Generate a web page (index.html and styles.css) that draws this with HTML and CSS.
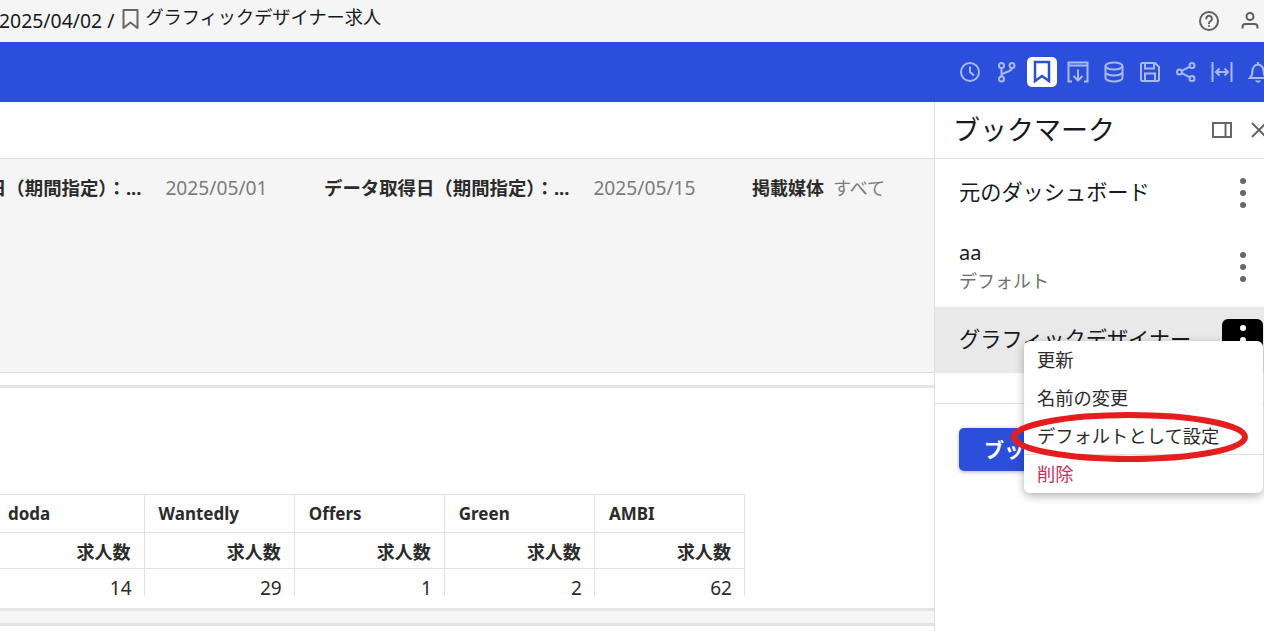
FILE: index.html
```html
<!DOCTYPE html>
<html lang="ja">
<head>
    <meta charset="UTF-8">
    <title>グラフィックデザイナー求人</title>
    <link rel="stylesheet" href="styles.css">
</head>
<body>

    <!-- パンくず -->
    <div class="topbar">
        <div class="crumb">
            <span class="crumb-date">2025/04/02 /</span>
            <svg class="crumb-icon" width="17" height="22" viewBox="0 0 17 22"><path d="M1.500 2h14v18l-7-5.500L1.500 20z" fill="none" stroke="#666" stroke-width="2" stroke-linejoin="round"/></svg>
            <span class="crumb-name">グラフィックデザイナー求人</span>
        </div>
        <div class="top-icons">
            <svg width="22" height="22" viewBox="0 0 22 22" fill="none" stroke="#5f5f5f" stroke-width="2"><circle cx="11" cy="11" r="9"/><path d="M8.300 8.600a2.800 2.800 0 1 1 4.300 2.400c-1 .6-1.600 1-1.600 2.200" stroke-linecap="round"/><path d="M11 15.300v1.500"/></svg>
            <svg width="20" height="22" viewBox="0 0 20 22" fill="none" stroke="#5f5f5f" stroke-width="2"><circle cx="10" cy="6.500" r="3.500"/><path d="M2.500 18.500v-1.500c0-2 1.500-3 3-3h9c1.500 0 3 1 3 3v1.500"/></svg>
        </div>
    </div>

    <div class="toolbar">
        <div class="tool"><svg width="22" height="22" viewBox="0 0 22 22"><circle cx="11" cy="11" r="9"/><path d="M11 5.500V11l4 3.500"/></svg></div>
        <div class="tool"><svg width="22" height="22" viewBox="0 0 22 22"><circle cx="6.500" cy="4.500" r="2.500"/><circle cx="6.500" cy="18" r="2.500"/><circle cx="17" cy="4.500" r="2.500"/><path d="M6.500 7v8.500M17 7c0 5-10.500 3-10.500 8.500"/></svg></div>
        <div class="tool tool-active"><svg width="22" height="24" viewBox="0 0 22 24"><path d="M4 2h14v19l-7-5-7 5z"/></svg></div>
        <div class="tool"><svg width="22" height="22" viewBox="0 0 22 22"><path d="M5 20.500H1.500v-19h19v19H17M1.500 4.500h19M11 8.500v11M6.500 15l4.500 4.500 4.500-4.500"/></svg></div>
        <div class="tool"><svg width="22" height="22" viewBox="0 0 22 22"><ellipse cx="11" cy="5" rx="8.500" ry="3.500"/><path d="M2.500 5v12c0 2 4 3.500 8.500 3.500s8.500-1.500 8.500-3.500V5M2.500 11c0 2 4 3.500 8.500 3.500s8.500-1.500 8.500-3.500"/></svg></div>
        <div class="tool"><svg width="22" height="22" viewBox="0 0 22 22"><path d="M2 3.500A1.500 1.500 0 0 1 3.500 2H16l4 4v12.500a1.500 1.500 0 0 1-1.500 1.500h-15A1.500 1.500 0 0 1 2 18.500zM6 2v5.500h9V2M6 20v-7.500h10V20"/></svg></div>
        <div class="tool"><svg width="22" height="22" viewBox="0 0 22 22"><circle cx="4.500" cy="11" r="2.500"/><circle cx="17" cy="4.500" r="2.500"/><circle cx="17" cy="17.500" r="2.500"/><path d="M6.800 9.800l8-4.200M6.800 12.200l8 4.200"/></svg></div>
        <div class="tool"><svg width="22" height="22" viewBox="0 0 22 22"><path d="M1.500 1v20M20.500 1v20M5 11h12M8.500 7.500L5 11l3.500 3.500M13.500 7.500L17 11l-3.500 3.500"/></svg></div>
        <div class="tool"><svg width="22" height="22" viewBox="0 0 22 22"><path d="M3 17h16c-2-2-2.500-4-2.500-7.500 0-3-2.500-6-5.500-6s-5.500 3-5.500 6C5.500 13 5 15 3 17zM11 1v2.500M9 19.500c.5 1.500 3.500 1.500 4 0"/></svg></div>
    </div>

    <div class="content">
        <div class="main">
            <div class="sheet-title"></div>

            <div class="filters">
                <div class="filter filter-first">
                    <span class="filter-label">データ取得日（期間指定）：...</span>
                    <span class="filter-value">2025/05/01</span>
                </div>
                <div class="filter">
                    <span class="filter-label">データ取得日（期間指定）：...</span>
                    <span class="filter-value">2025/05/15</span>
                </div>
                <div class="filter filter-media">
                    <span class="filter-label filter-label-short">掲載媒体</span>
                    <span class="filter-kana">すべて</span>
                </div>
            </div>

            <div class="visual">
                <div class="table-clip">
                    <table class="media-table">
                        <tr class="head-row">
                            <th>doda</th><th>Wantedly</th><th>Offers</th><th>Green</th><th>AMBI</th>
                        </tr>
                        <tr class="sub-row">
                            <th>求人数</th><th>求人数</th><th>求人数</th><th>求人数</th><th>求人数</th>
                        </tr>
                        <tr class="data-row">
                            <td>14</td><td>29</td><td>1</td><td>2</td><td>62</td>
                        </tr>
                    </table>
                </div>
            </div>

            <div class="gap-strip"></div>
        </div>

        <div class="panel">
            <div class="panel-head">
                <span class="panel-title">ブックマーク</span>
                <svg class="panel-dock" width="22" height="18" viewBox="0 0 22 18" fill="none" stroke="#666" stroke-width="2"><rect x="2" y="2" width="18" height="14"/><path d="M14.500 2v14"/></svg>
                <svg class="panel-close" width="18" height="18" viewBox="0 0 18 18" fill="none" stroke="#666" stroke-width="2"><path d="M2 2l14 14M16 2L2 16"/></svg>
            </div>

            <div class="bm-list">
                <div class="bm-row bm-first">
                    <div class="bm-text"><div class="bm-name">元のダッシュボード</div></div>
                    <div class="dots"><i></i><i></i><i></i></div>
                </div>
                <div class="bm-row bm-second">
                    <div class="bm-text">
                        <div class="bm-name bm-latin">aa</div>
                        <div class="bm-sub">デフォルト</div>
                    </div>
                    <div class="dots"><i></i><i></i><i></i></div>
                </div>
                <div class="bm-row bm-third">
                    <div class="bm-text"><div class="bm-name">グラフィックデザイナー</div></div>
                    <div class="dots dots-active"><i></i><i></i><i></i></div>
                </div>
            </div>

            <div class="panel-foot">
                <button class="add-btn">ブックマークを追加</button>
            </div>

            <!-- コンテキストメニュー -->
            <div class="menu">
                <div class="menu-item">更新</div>
                <div class="menu-item">名前の変更</div>
                <div class="menu-item menu-item-line">デフォルトとして設定</div>
                <div class="menu-item menu-danger">削除</div>
            </div>
            <svg class="ring" width="240" height="56" viewBox="0 0 240 56"><ellipse cx="119.500" cy="27" rx="115.500" ry="22" fill="none" stroke="#e41e1e" stroke-width="6"/></svg>
        </div>
    </div>

</body>
</html>
```

FILE: styles.css
```css
/* ベース */
html, body {
    margin: 0;
    padding: 0;
    height: 631px;
    overflow: hidden;
}

body {
    font-family: "Noto Sans", "Noto Sans CJK JP", sans-serif;
    color: #16191f;
    background-color: #fff;
}

.topbar {
    height: 42px;
    background-color: #f5f5f5;
    display: flex;
    justify-content: space-between;
    align-items: center;
}

.crumb {
    display: flex;
    align-items: center;
    margin-left: -1px;
    color: #16191f;
}

.crumb-date {
    font-size: 19.400px;
    margin-top: -2px;
}

.crumb-icon {
    margin-left: 8px;
    margin-right: 6px;
    margin-top: -5px;
}

.crumb-name {
    font-size: 18.200px;
    margin-top: -10px;
}

.top-icons {
    display: flex;
    align-items: center;
    gap: 20px;
    margin-right: 4px;
}

/* 青いツールバー */
.toolbar {
    height: 60px;
    background-color: #2c4fdb;
    display: flex;
    justify-content: flex-end;
    align-items: center;
    gap: 6px;
    margin-right: -9px;
}

.tool {
    width: 30px;
    height: 30px;
    border-radius: 5px;
    display: flex;
    align-items: center;
    justify-content: center;
}

.tool svg {
    fill: none;
    stroke: #a9b9ef;
    stroke-width: 2;
}

.tool-active {
    background-color: #fff;
}

.tool-active svg {
    stroke: #2c4fdb;
    stroke-width: 2.500;
}

.content {
    display: flex;
    height: 529px;
}

.main {
    width: 934px;
    flex-shrink: 0;
    overflow: hidden;
}

.sheet-title {
    height: 56px;
    border-bottom: 1px solid #e0e0e0;
}

.filters {
    height: 214px;
    background-color: #f5f5f5;
    border-bottom: 1px solid #dcdcdc;
    display: flex;
    align-items: flex-start;
    padding-top: 16px;
    box-sizing: border-box;
    font-size: 18.400px;
    white-space: nowrap;
}

.filter {
    flex: 0 0 428px;
    display: flex;
    align-items: center;
    gap: 24px;
    line-height: 26px;
}

.filter-first {
    margin-left: -104px;
}

.filter-media {
    gap: 9px;
}

.filter-label {
    font-weight: 700;
    color: #2b2b2b;
}

.filter-label-short {
    font-size: 18px;
}

.filter-value {
    font-size: 19.200px;
    color: #7c7c7c;
}

.filter-kana {
    font-size: 18px;
    color: #7c7c7c;
}

.visual {
    margin-top: 12px;
    border-top: 3px solid #e4e4e4;
    height: 223px;
    box-sizing: border-box;
    padding-top: 106px;
}

.table-clip {
    height: 102px;
    overflow: hidden;
    margin-left: -6px;
}

.media-table {
    border-collapse: collapse;
    table-layout: fixed;
    width: 751px;
    color: #2b2b2b;
}

.media-table th,
.media-table td {
    width: 150px;
    border: 1px solid #e2e2e2;
    box-sizing: border-box;
    padding: 0 13px;
}

.media-table tr > :first-child {
    border-left: none;
}

.head-row th {
    height: 38px;
    text-align: left;
    font-size: 17px;
    padding-left: 14px;
}

.sub-row th {
    height: 36px;
    text-align: right;
    font-size: 18px;
}

.data-row td {
    height: 38px;
    text-align: right;
    font-size: 19px;
    padding-right: 12px;
}

.gap-strip {
    height: 12px;
    background-color: #f5f5f5;
    border-top: 3px solid #e4e4e4;
    border-bottom: 3px solid #e4e4e4;
}

/* ブックマークパネル */
.panel {
    position: relative;
    flex: 1;
    min-width: 0;
    border-left: 1px solid #e0e0e0;
    overflow: hidden;
}

.panel-head {
    height: 56px;
    border-bottom: 1px solid #e0e0e0;
    display: flex;
    align-items: center;
    padding-left: 18px;
}

.panel-title {
    font-size: 27px;
    flex: 1;
    margin-top: -4px;
}

.panel-dock {
    flex-shrink: 0;
    margin-right: 17px;
}

.panel-close {
    flex-shrink: 0;
    margin-right: -4px;
}

.bm-list {
    border-bottom: 1px solid #e0e0e0;
    height: 244px;
}

.bm-row {
    display: flex;
    justify-content: space-between;
    align-items: center;
    padding-left: 24px;
    box-sizing: border-box;
}

.bm-first {
    height: 68px;
}

.bm-second {
    height: 80px;
}

.bm-third {
    height: 66px;
    background-color: #e9e9e9;
}

.bm-name {
    font-size: 21.200px;
    line-height: 28px;
    margin-top: -2px;
}

.bm-latin {
    font-size: 20px;
    margin-top: -1px;
}

.bm-sub {
    font-size: 18px;
    line-height: 27px;
    margin-top: 1px;
    color: #6f6f6f;
}

.dots {
    width: 41px;
    height: 36px;
    display: flex;
    flex-direction: column;
    justify-content: center;
    align-items: center;
    gap: 6px;
    margin-right: 1px;
}

.dots i {
    width: 6px;
    height: 6px;
    border-radius: 50%;
    background-color: #666;
}

.dots-active {
    background-color: #000;
    border-radius: 6px;
    height: 41px;
    align-self: flex-start;
    margin-top: 12px;
}

.dots-active i {
    background-color: #fff;
}

.panel-foot {
    padding: 24px 24px;
}

.add-btn {
    width: 200px;
    height: 43px;
    background-color: #2c4fdb;
    color: #fff;
    border: none;
    border-radius: 5px;
    font-family: inherit;
    font-size: 20px;
    font-weight: 700;
    text-align: left;
    padding-left: 25px;
    white-space: nowrap;
    overflow: hidden;
    box-shadow: 0 1px 4px rgba(0, 0, 0, 0.3);
}

.menu {
    position: absolute;
    left: 89px;
    top: 239px;
    width: 239px;
    height: 152px;
    background-color: #fff;
    border-radius: 6px;
    box-shadow: 0 3px 10px rgba(0, 0, 0, 0.3);
}

.menu-item {
    height: 38px;
    line-height: 38px;
    padding-left: 13px;
    font-size: 18.300px;
    color: #2b2b2b;
    box-sizing: border-box;
    white-space: nowrap;
}

.menu-item-line {
    border-bottom: 1px solid #e0e0e0;
}

.menu-danger {
    color: #c8315a;
}

.ring {
    position: absolute;
    left: 75px;
    top: 308px;
}
```
